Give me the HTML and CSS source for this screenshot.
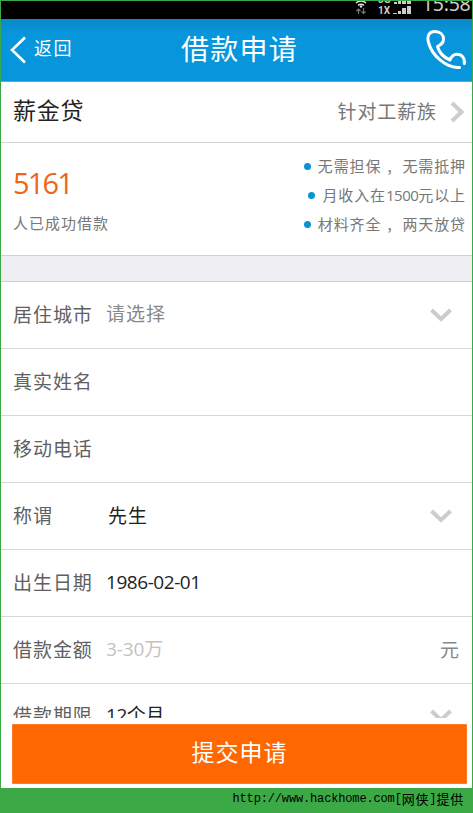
FILE: index.html
```html
<!DOCTYPE html>
<html lang="zh-CN">
<head>
<meta charset="utf-8">
<title>借款申请</title>
<link rel="stylesheet" href="styles.css">
</head>
<body>
<div class="screen">
  <div class="status">
    <svg class="wifi" width="14" height="14" viewBox="0 0 14 14" fill="none">
      <path d="M2 2Q7-2 12 2M4 4.300Q7 2 10 4.300" stroke="#ddd" stroke-width="1.500"/>
      <circle cx="7" cy="5.500" r="1.200" fill="#ddd"/>
      <path d="M4.500 13V8M2.500 10l2-2 2 2M9.500 7v5.500M7.500 10.500l2 2 2-2" stroke="#777" stroke-width="1.200"/>
    </svg>
    <div class="net"><span>3G</span><span>1X</span></div>
    <svg class="bars" width="20" height="14" viewBox="0 0 20 14" fill="#ccc">
      <path d="M2 1h3v2H2zM6 0h3v3H6zM10 0h4v3h-4zM15 0h4v3h-4zM1 12h4v1H1zM6 10h3v3H6zM10 7h4v6h-4zM15 5h4v8h-4z"/>
    </svg>
    <span class="clock">15:58</span>
  </div>
  <header class="header">
    <a class="back">
      <svg width="17" height="28" viewBox="0 0 17 28" fill="none" stroke="#fff" stroke-width="2.600"><path d="M15 1.500 2 14l13 12.500"/></svg>
      <span>返回</span>
    </a>
    <h1>借款申请</h1>
    <svg class="phone" width="42" height="42" viewBox="0 0 42 42" fill="none" stroke="#fff" stroke-width="3" stroke-linecap="round" stroke-linejoin="round">
      <path d="M34.500 38.500C22 39.500 7 27 3.500 13.500C1.500 6 5 2.500 10 2.500C15.500 2.500 18.500 6 18.500 10C18.500 14 16.500 15.500 12.500 17.500C14 23 19 28.500 25 31C26.500 27 29 25.300 32 25.300C37 25.300 40 29 39.300 34.500"/>
    </svg>
  </header>
  <div class="product">
    <h2>薪金贷</h2>
    <span class="audience">针对工薪族</span>
    <svg width="15" height="22" viewBox="0 0 15 22" fill="none" stroke="#ccc" stroke-width="4"><path d="m2 2 9.500 9L2 20"/></svg>
  </div>
  <div class="summary">
    <div class="count"><strong>5161</strong><span>人已成功借款</span></div>
    <ul class="terms">
      <li>无需担保<span class="comma">,</span>无需抵押</li>
      <li>月收入在<span class="num">1500</span>元以上</li>
      <li>材料齐全<span class="comma">,</span>两天放贷</li>
    </ul>
  </div>
  <div class="band"></div>
  <div class="form">
    <div class="row"><label>居住城市</label><span class="value hint">请选择</span><svg class="down" width="22" height="14" viewBox="0 0 22 14"><path d="m1.500 2 9.500 9 9.500-9"/></svg></div>
    <div class="row"><label>真实姓名</label></div>
    <div class="row"><label>移动电话</label></div>
    <div class="row"><label>称谓</label><span class="value title">先生</span><svg class="down" width="22" height="14" viewBox="0 0 22 14"><path d="m1.500 2 9.500 9 9.500-9"/></svg></div>
    <div class="row"><label>出生日期</label><span class="value latin">1986-02-01</span></div>
    <div class="row"><label>借款金额</label><span class="value pale">3-30万</span><span class="unit">元</span></div>
    <div class="row last"><label>借款期限</label><span class="value latin">12个月</span><svg class="down" width="22" height="14" viewBox="0 0 22 14"><path d="m1.500 2 9.500 9 9.500-9"/></svg></div>
  </div>
  <button class="submit">提交申请</button>
</div>
<footer class="credit"><span class="url">http://www.hackhome.com[</span><span>网侠</span><span class="url">]</span><span>提供</span></footer>
</body>
</html>
```
FILE: styles.css
```css
* { box-sizing: border-box; }
body {
  margin: 0;
  width: 473px;
  height: 813px;
  padding: 1px 1px 0;
  overflow: hidden;
  background: #3ba946;
  font-family: "Noto Sans CJK SC", sans-serif;
}
h1, h2, ul { margin: 0; padding: 0; font-weight: 400; }
svg { flex: none; }
.screen { height: 787px; background: #fff; overflow: hidden; }
.status {
  height: 18px;
  background: #000;
  display: flex;
  align-items: flex-start;
  overflow: hidden;
  padding-left: 353px;
}
.net {
  width: 13px;
  margin: -7px 0 0 10px;
  display: flex;
  flex-direction: column;
  font: 700 10px/11px Roboto, sans-serif;
  color: #ccc;
}
.bars { margin-left: 1px; }
.clock {
  margin: -8px 0 0 10px;
  font: 19.500px/22px "Noto Sans", sans-serif;
  color: #ccc;
  letter-spacing: -.3px;
}
.header {
  height: 63px;
  display: grid;
  grid-template-columns: 130px 1fr 130px;
  align-items: center;
  background: linear-gradient(#0a88c8, #0796dc 14px);
  border-bottom: 1px solid #55b2e0;
  color: #fff;
}
.back {
  display: flex;
  align-items: center;
  gap: 7px;
  padding-left: 9px;
  font-size: 18px;
  line-height: 26px;
  letter-spacing: 1.500px;
}
.back span { margin-top: -6px; }
.header h1 {
  font-size: 28px;
  line-height: 36px;
  letter-spacing: 1.200px;
  text-align: center;
  white-space: nowrap;
  margin-top: -4px;
  padding-left: 6px;
}
.phone { justify-self: end; margin-right: 5px; }
.product {
  height: 61px;
  display: flex;
  align-items: center;
  padding: 0 7px 0 12px;
  border-bottom: 1px solid #d4d4d4;
}
.product h2 { font-size: 23px; line-height: 32px; letter-spacing: .8px; color: #222; margin-top: -7px; }
.audience { margin: -4px 13px 0 auto; font-size: 19px; letter-spacing: .9px; color: #777; }
.summary {
  height: 113px;
  display: flex;
  justify-content: space-between;
  padding: 0 6px 0 12px;
  border-bottom: 1px solid #d0d0d2;
}
.count { display: flex; flex-direction: column; padding-top: 20px; }
.count strong { font-family: "Open Sans", sans-serif; font-size: 29px; line-height: 40px; font-weight: 400; letter-spacing: -1.800px; color: #f0641a; }
.count span { font-size: 15px; line-height: 22px; letter-spacing: 1px; color: #777; margin-top: 9px; }
.terms { list-style: none; padding-top: 8px; }
.terms li {
  height: 29px;
  display: flex;
  align-items: center;
  justify-content: flex-end;
  font-size: 15px;
  line-height: 22px;
  letter-spacing: .9px;
  color: #777;
}
.terms li::before { content: ""; width: 7px; height: 7px; border-radius: 50%; background: #0893d5; margin: 1px 7px 0 0; }
.comma { width: 21px; padding-left: 6px; }
.num { font-family: "Open Sans", sans-serif; letter-spacing: -.5px; }
.band { height: 26px; background: #eeeef3; border-bottom: 1px solid #d0d0d2; }
.form { height: 436px; overflow: hidden; }
.row {
  height: 67px;
  display: flex;
  align-items: center;
  padding: 0 20px 2px 12px;
  border-bottom: 1px solid #d8d8d8;
  font-size: 19px;
  line-height: 28px;
  letter-spacing: .95px;
  color: #606060;
}
.row label { width: 93px; }
.value { color: #222; }
.value.hint { color: #888; margin-top: -2px; }
.value.title { margin-left: 2px; }
.value.latin { font-family: "Open Sans", "Noto Sans CJK SC", sans-serif; letter-spacing: -.45px; }
.value.pale { font-family: "Open Sans", "Noto Sans CJK SC", sans-serif; color: #c2c2c2; letter-spacing: -.1px; }
.row.last { padding-bottom: 5px; }
.unit { margin: 0 -8px 0 auto; color: #888; }
.down { margin: 2px 0 0 auto; fill: none; stroke: #ccc; stroke-width: 4; }
.submit {
  display: block;
  width: 455px;
  height: 60px;
  margin: 6px 0 0 11px;
  padding: 0 0 6px;
  border: 1px solid #ff7a24;
  border-radius: 1px;
  background: #ff6700;
  color: #fff;
  font: 23px/30px "Noto Sans CJK SC", sans-serif;
  letter-spacing: 1px;
}
.credit {
  height: 25px;
  display: flex;
  justify-content: flex-end;
  align-items: center;
  padding: 0 8px 4px 0;
  font-size: 13px;
  letter-spacing: .8px;
  color: #000;
}
.url { font-family: "Liberation Mono", monospace; font-size: 12px; letter-spacing: -.15px; }
```
